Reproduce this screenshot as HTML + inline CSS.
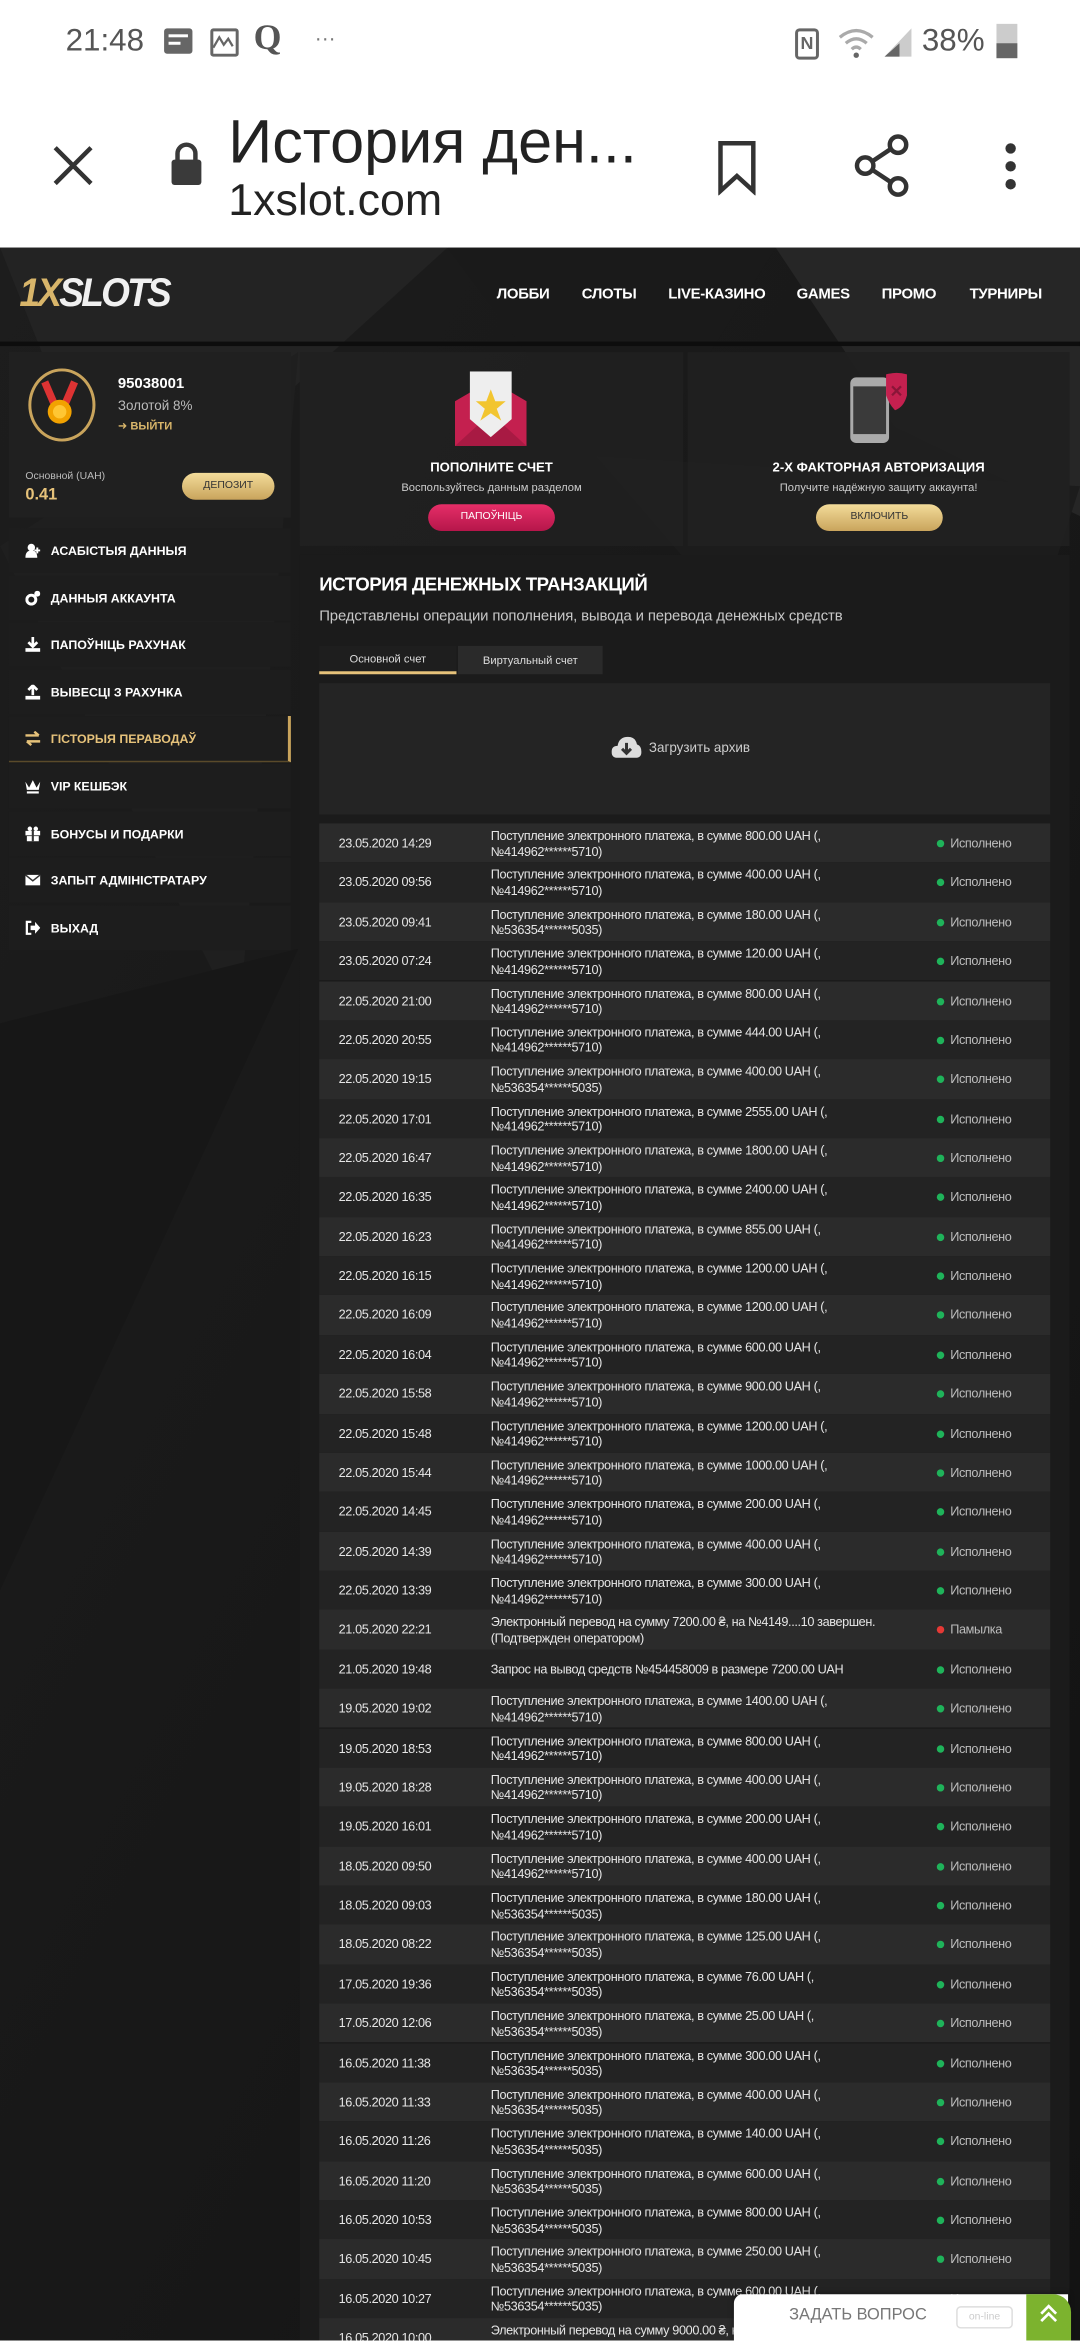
<!DOCTYPE html>
<html><head><meta charset="utf-8">
<style>
html,body{margin:0;padding:0;width:1080px;height:2340px;overflow:hidden;background:#fff;}
#w{position:absolute;left:0;top:0;width:724px;height:1569px;transform:scale(1.49171);transform-origin:0 0;font-family:"Liberation Sans","DejaVu Sans",sans-serif;overflow:hidden;}
.abs{position:absolute}
#status{left:0;top:0;width:724px;height:56px;background:#fff;color:#555;}
#bbar{left:0;top:56px;width:724px;height:110px;background:#fff;}
#page{left:0;top:166px;width:724px;height:1403px;background:#141414;overflow:hidden;}
.nav{position:absolute;top:26px;font-size:10px;font-weight:bold;color:#fff;letter-spacing:-0.2px}
.card{position:absolute;background:rgba(32,32,32,0.93)}
.mi{position:absolute;left:6px;width:189px;height:30px;background:rgba(30,30,30,0.95);color:#fff;font-size:8.3px;font-weight:bold;line-height:30px;}
.mi span.t{position:absolute;left:28px}
.mi svg{position:absolute;left:11px;top:10px}
.row{position:absolute;left:214px;width:490px;height:26.37px;font-size:8.5px;color:#e6e6e6;letter-spacing:-0.25px}
.row .d{position:absolute;left:13px;top:0;line-height:26.37px}
.row .x{position:absolute;left:115px;top:3px;line-height:10.5px;width:300px;white-space:nowrap}
.row .x1{top:0;line-height:26.37px}
.row .s{position:absolute;left:423px;top:0;line-height:26.37px;color:#bdbdbd}
.row .s:before{content:"";position:absolute;left:-9px;top:11px;width:5px;height:5px;border-radius:50%;background:#1fb35a}
.row .s.e:before{background:#e53935}
.r0{background:#2b2b2b}.r1{background:#232323}
</style></head><body>
<div id="w">
<div id="status" class="abs">
 <div class="abs" style="left:44px;top:16px;font-size:21px;color:#555">21:48</div>
 <div class="abs" style="left:110px;top:19px;width:19px;height:17px;background:#666;border-radius:2px"></div>
 <div class="abs" style="left:113px;top:23px;width:13px;height:2px;background:#fff"></div>
 <div class="abs" style="left:113px;top:28px;width:8px;height:2px;background:#fff"></div>
 <div class="abs" style="left:141px;top:19px;width:15px;height:15px;border:2px solid #666;border-radius:2px"></div>
 <svg class="abs" style="left:142px;top:22px" width="15" height="12"><path d="M1 10 L5 3 L8 8 L11 4 L14 9" stroke="#666" stroke-width="1.5" fill="none"/></svg>
 <div class="abs" style="left:170px;top:13px;font-size:24px;font-weight:bold;font-family:'Liberation Serif',serif;color:#555">Q</div>
 <div class="abs" style="left:211px;top:17px;font-size:14px;color:#777">···</div>
 <div class="abs" style="left:533px;top:19px;width:12px;height:17px;border:2px solid #666;border-radius:3px;font-size:12px;font-weight:bold;color:#666;line-height:17px;text-align:center">N</div>
 <svg class="abs" style="left:561px;top:17px" width="26" height="22"><path d="M2 8 Q13 -1 24 8 M6 12 Q13 6 20 12 M10 16 Q13 13 16 16" stroke="#aaa" stroke-width="2.2" fill="none"/><circle cx="13" cy="20" r="1.8" fill="#666"/></svg>
 <svg class="abs" style="left:591px;top:17px" width="22" height="22"><path d="M2 21 L20 21 L20 2 Z" fill="#ccc"/><path d="M2 21 L12 21 L12 12 Z" fill="#666"/></svg>
 <div class="abs" style="left:618px;top:16px;font-size:21px;color:#555">38%</div>
 <div class="abs" style="left:668px;top:16px;width:14px;height:23px;background:#ccc"></div>
 <div class="abs" style="left:668px;top:29px;width:14px;height:10px;background:#666"></div>
</div>
<div id="bbar" class="abs">
 <svg class="abs" style="left:34px;top:40px" width="30" height="30"><path d="M3 3 L27 27 M27 3 L3 27" stroke="#333" stroke-width="3"/></svg>
 <svg class="abs" style="left:113px;top:38px" width="24" height="32"><path d="M6 14 V9 A6 6 0 0 1 18 9 V14" stroke="#3a3a3a" stroke-width="3" fill="none"/><rect x="2" y="13" width="20" height="17" rx="2" fill="#3a3a3a"/></svg>
 <div class="abs" style="left:153px;top:16px;font-size:41px;color:#222;white-space:nowrap">История ден...</div>
 <div class="abs" style="left:153px;top:62px;font-size:30px;color:#222">1xslot.com</div>
 <svg class="abs" style="left:478px;top:37px" width="32" height="38"><path d="M5 3 H27 V35 L16 25 L5 35 Z" stroke="#333" stroke-width="3" fill="none"/></svg>
 <svg class="abs" style="left:570px;top:32px" width="42" height="46"><circle cx="32" cy="9" r="5.5" stroke="#333" stroke-width="3" fill="none"/><circle cx="10" cy="23" r="5.5" stroke="#333" stroke-width="3" fill="none"/><circle cx="32" cy="37" r="5.5" stroke="#333" stroke-width="3" fill="none"/><path d="M15 20 L27 12 M15 26 L27 34" stroke="#333" stroke-width="3"/></svg>
 <div class="abs" style="left:674px;top:40px;width:7px;height:7px;border-radius:50%;background:#333"></div>
 <div class="abs" style="left:674px;top:52px;width:7px;height:7px;border-radius:50%;background:#333"></div>
 <div class="abs" style="left:674px;top:64px;width:7px;height:7px;border-radius:50%;background:#333"></div>
</div>
<div id="page" class="abs">
 <svg class="abs" style="left:0;top:0" width="724" height="1403">
  <defs><linearGradient id="bg" x1="0" y1="0" x2="1" y2="1"><stop offset="0" stop-color="#1d1d1d"/><stop offset="1" stop-color="#131313"/></linearGradient></defs>
  <rect width="724" height="1403" fill="url(#bg)"/>
  <polygon points="0,0 300,0 80,200" fill="#232323"/>
  <polygon points="300,0 520,0 420,160" fill="#1a1a1a"/>
  <polygon points="520,0 724,0 724,180 600,120" fill="#262626"/>
  <polygon points="0,200 200,70 160,520" fill="#1f1f1f"/>
  <polygon points="0,520 200,470 0,900" fill="#171717"/>
  <polygon points="400,140 724,160 640,420" fill="#1c1c1c"/>
 </svg>
 <div class="abs" style="left:0;top:63px;width:724px;height:3px;background:#0d0d0d"></div>
 <div class="abs" style="left:13px;top:15px;font-size:27px;font-weight:900;font-style:italic;letter-spacing:-2px;transform:scaleX(0.92);transform-origin:0 0"><span style="color:#d8b56a">1X</span><span style="color:#f0f0f0">SLOTS</span></div>
 <div class="nav" style="left:333px">ЛОББИ</div>
 <div class="nav" style="left:390px">СЛОТЫ</div>
 <div class="nav" style="left:448px">LIVE-КАЗИНО</div>
 <div class="nav" style="left:534px">GAMES</div>
 <div class="nav" style="left:591px">ПРОМО</div>
 <div class="nav" style="left:650px">ТУРНИРЫ</div>

 <div class="card" style="left:6px;top:70px;width:189px;height:111px"></div>
 <div class="abs" style="left:19px;top:81px;width:41px;height:45px;border:2px solid #c9a45c;border-radius:50%"></div>
 <svg class="abs" style="left:26px;top:88px" width="28" height="34"><path d="M4 2 L10 16 M24 2 L18 16" stroke="#d33" stroke-width="5"/><circle cx="14" cy="22" r="8" fill="#f2a200"/><circle cx="14" cy="22" r="4.5" fill="#ffc633"/></svg>
 <div class="abs" style="left:79px;top:86px;font-size:10px;font-weight:bold;color:#fff">95038001</div>
 <div class="abs" style="left:79px;top:101px;font-size:9px;color:#bbb">Золотой 8%</div>
 <div class="abs" style="left:79px;top:115px;font-size:7.5px;font-weight:bold;color:#d8b56a">➜ ВЫЙТИ</div>
 <div class="abs" style="left:17px;top:150px;font-size:7px;color:#bbb">Основной (UAH)</div>
 <div class="abs" style="left:17px;top:160px;font-size:11px;font-weight:bold;color:#e6c27a">0.41</div>
 <div class="abs" style="left:122px;top:151px;width:62px;height:18px;border-radius:9px;background:linear-gradient(#f3dc9a,#c9a45c);font-size:7px;color:#333;text-align:center;line-height:18px">ДЕПОЗИТ</div>

 <div class="mi" style="top:188px"><svg width="10" height="10"><circle cx="4" cy="3" r="2.5" fill="#fff"/><path d="M0 10 Q0 5 4 5 Q8 5 8 10Z" fill="#fff"/><path d="M8 3 V7 M6 5 H10" stroke="#fff" stroke-width="1.3"/></svg><span class="t">АСАБІСТЫЯ ДАННЫЯ</span></div>
 <div class="mi" style="top:219.6px"><svg width="10" height="10"><circle cx="4" cy="6" r="3" stroke="#fff" stroke-width="2" fill="none"/><circle cx="8" cy="2" r="2" fill="#fff"/></svg><span class="t">ДАННЫЯ АККАУНТА</span></div>
 <div class="mi" style="top:251.2px"><svg width="10" height="10"><path d="M5 0 V6 M2 3.5 L5 6.5 L8 3.5" stroke="#fff" stroke-width="1.8" fill="none"/><rect x="0" y="7.5" width="10" height="2.5" fill="#fff"/></svg><span class="t">ПАПОЎНІЦЬ РАХУНАК</span></div>
 <div class="mi" style="top:282.8px"><svg width="10" height="10"><path d="M5 7 V1 M2 3.5 L5 0.5 L8 3.5" stroke="#fff" stroke-width="1.8" fill="none"/><rect x="0" y="7.5" width="10" height="2.5" fill="#fff"/></svg><span class="t">ВЫВЕСЦІ З РАХУНКА</span></div>
 <div class="mi" style="top:314.4px;color:#e6c27a;border-right:2px solid #c9a45c;border-bottom:1px solid #5a4a2a;width:187px"><svg width="10" height="10"><path d="M0 3 H9 M6 0.5 L9 3 M10 7 H1 M4 9.5 L1 7" stroke="#e6c27a" stroke-width="1.6" fill="none"/></svg><span class="t">ГІСТОРЫЯ ПЕРАВОДАЎ</span></div>
 <div class="mi" style="top:346px"><svg width="10" height="10"><path d="M0 2 L2.5 6 L5 1 L7.5 6 L10 2 L9 7.5 H1Z" fill="#fff"/><rect x="1" y="8.5" width="8" height="1.5" fill="#fff"/></svg><span class="t">VIP КЕШБЭК</span></div>
 <div class="mi" style="top:377.6px"><svg width="10" height="10"><rect x="0" y="3" width="10" height="3" fill="#fff"/><rect x="1" y="6.5" width="8" height="3.5" fill="#fff"/><rect x="4.3" y="3" width="1.4" height="7" fill="#333"/><circle cx="3" cy="1.6" r="1.5" fill="#fff"/><circle cx="7" cy="1.6" r="1.5" fill="#fff"/></svg><span class="t">БОНУСЫ И ПОДАРКИ</span></div>
 <div class="mi" style="top:409.2px"><svg width="10" height="10"><rect x="0" y="1.5" width="10" height="7" fill="#fff"/><path d="M0 1.5 L5 5.5 L10 1.5" stroke="#333" stroke-width="1" fill="none"/></svg><span class="t">ЗАПЫТ АДМІНІСТРАТАРУ</span></div>
 <div class="mi" style="top:440.8px"><svg width="10" height="10"><path d="M4 1 H1 V9 H4" stroke="#fff" stroke-width="1.5" fill="none"/><path d="M3.5 3.5 H6.5 V1 L10 5 L6.5 9 V6.5 H3.5Z" fill="#fff"/></svg><span class="t">ВЫХАД</span></div>

 <div class="card" style="left:201px;top:70px;width:257px;height:130px"></div>
 <div class="card" style="left:461px;top:70px;width:256px;height:130px"></div>
 <svg class="abs" style="left:305px;top:83px" width="48" height="50"><path d="M0 20 L24 6 L48 20 V50 H0Z" fill="#c4204f"/><path d="M0 50 L24 28 L48 50Z" fill="#a81a43"/><path d="M10 0 H38 V32 L24 44 L10 32Z" fill="#eee"/><path d="M24 12 L27 20 L34 20 L28 25 L31 33 L24 28 L17 33 L20 25 L14 20 L21 20Z" fill="#f2c530"/></svg>
 <div class="abs" style="left:201px;top:142px;width:257px;text-align:center;font-size:8.8px;font-weight:bold;color:#fff">ПОПОЛНИТЕ СЧЕТ</div>
 <div class="abs" style="left:201px;top:156px;width:257px;text-align:center;font-size:7.5px;color:#ccc">Воспользуйтесь данным разделом</div>
 <div class="abs" style="left:287px;top:172px;width:85px;height:18px;border-radius:9px;background:linear-gradient(#e62e68,#b5164a);font-size:7px;color:#fff;text-align:center;line-height:18px">ПАПОЎНІЦЬ</div>
 <svg class="abs" style="left:568px;top:83px" width="44" height="50"><rect x="2" y="4" width="26" height="44" rx="4" fill="#aaa"/><rect x="4" y="10" width="22" height="32" fill="#3a3a3a"/><path d="M26 2 Q33 0 40 2 V16 Q38 24 32 26 Q28 22 26 16Z" fill="#c4204f"/><path d="M30 10 L36 16 M36 10 L30 16" stroke="#8a1538" stroke-width="1.5"/></svg>
 <div class="abs" style="left:461px;top:142px;width:256px;text-align:center;font-size:8.8px;font-weight:bold;color:#fff">2-Х ФАКТОРНАЯ АВТОРИЗАЦИЯ</div>
 <div class="abs" style="left:461px;top:156px;width:256px;text-align:center;font-size:7.5px;color:#ccc">Получите надёжную защиту аккаунта!</div>
 <div class="abs" style="left:547px;top:172px;width:85px;height:18px;border-radius:9px;background:linear-gradient(#f3dc9a,#c9a45c);font-size:7px;color:#333;text-align:center;line-height:18px">ВКЛЮЧИТЬ</div>

 <div class="card" style="left:201px;top:206px;width:516px;height:1200px;background:rgba(28,28,28,0.94)"></div>
 <div class="abs" style="left:214px;top:219px;font-size:12.5px;font-weight:bold;color:#fff;letter-spacing:-0.3px">ИСТОРИЯ ДЕНЕЖНЫХ ТРАНЗАКЦИЙ</div>
 <div class="abs" style="left:214px;top:242px;font-size:10px;color:#c8c8c8;letter-spacing:-0.1px">Представлены операции пополнения, вывода и перевода денежных средств</div>
 <div class="abs" style="left:214px;top:267px;width:92px;height:17px;border-bottom:2px solid #e6c27a;font-size:7.5px;color:#ddd;text-align:center;line-height:17px;background:#1e1e1e">Основной счет</div>
 <div class="abs" style="left:307px;top:267px;width:97px;height:19px;background:#2a2a2a;font-size:7.5px;color:#ddd;text-align:center;line-height:19px">Виртуальный счет</div>
 <div class="abs" style="left:214px;top:292px;width:490px;height:88px;background:#242424"></div>
 <svg class="abs" style="left:410px;top:327px" width="20" height="16"><path d="M4 15 Q0 15 0 11 Q0 7 4 7 Q5 1 11 1 Q16 1 17 6 Q20 7 20 11 Q20 15 16 15Z" fill="#ddd"/><path d="M10 5 V11 M7 9 L10 12 L13 9" stroke="#333" stroke-width="2" fill="none"/></svg>
 <div class="abs" style="left:435px;top:330px;font-size:9px;color:#ccc">Загрузить архив</div>
</div>

<div id="rows" class="abs" style="left:0;top:0">
<div class="row r0" style="top:552.0px"><span class="d">23.05.2020 14:29</span><span class="x">Поступление электронного платежа, в сумме 800.00 UAH (,<br>№414962******5710)</span><span class="s">Исполнено</span></div>
<div class="row r1" style="top:578.4px"><span class="d">23.05.2020 09:56</span><span class="x">Поступление электронного платежа, в сумме 400.00 UAH (,<br>№414962******5710)</span><span class="s">Исполнено</span></div>
<div class="row r0" style="top:604.7px"><span class="d">23.05.2020 09:41</span><span class="x">Поступление электронного платежа, в сумме 180.00 UAH (,<br>№536354******5035)</span><span class="s">Исполнено</span></div>
<div class="row r1" style="top:631.1px"><span class="d">23.05.2020 07:24</span><span class="x">Поступление электронного платежа, в сумме 120.00 UAH (,<br>№414962******5710)</span><span class="s">Исполнено</span></div>
<div class="row r0" style="top:657.5px"><span class="d">22.05.2020 21:00</span><span class="x">Поступление электронного платежа, в сумме 800.00 UAH (,<br>№414962******5710)</span><span class="s">Исполнено</span></div>
<div class="row r1" style="top:683.9px"><span class="d">22.05.2020 20:55</span><span class="x">Поступление электронного платежа, в сумме 444.00 UAH (,<br>№414962******5710)</span><span class="s">Исполнено</span></div>
<div class="row r0" style="top:710.2px"><span class="d">22.05.2020 19:15</span><span class="x">Поступление электронного платежа, в сумме 400.00 UAH (,<br>№536354******5035)</span><span class="s">Исполнено</span></div>
<div class="row r1" style="top:736.6px"><span class="d">22.05.2020 17:01</span><span class="x">Поступление электронного платежа, в сумме 2555.00 UAH (,<br>№414962******5710)</span><span class="s">Исполнено</span></div>
<div class="row r0" style="top:763.0px"><span class="d">22.05.2020 16:47</span><span class="x">Поступление электронного платежа, в сумме 1800.00 UAH (,<br>№414962******5710)</span><span class="s">Исполнено</span></div>
<div class="row r1" style="top:789.3px"><span class="d">22.05.2020 16:35</span><span class="x">Поступление электронного платежа, в сумме 2400.00 UAH (,<br>№414962******5710)</span><span class="s">Исполнено</span></div>
<div class="row r0" style="top:815.7px"><span class="d">22.05.2020 16:23</span><span class="x">Поступление электронного платежа, в сумме 855.00 UAH (,<br>№414962******5710)</span><span class="s">Исполнено</span></div>
<div class="row r1" style="top:842.1px"><span class="d">22.05.2020 16:15</span><span class="x">Поступление электронного платежа, в сумме 1200.00 UAH (,<br>№414962******5710)</span><span class="s">Исполнено</span></div>
<div class="row r0" style="top:868.4px"><span class="d">22.05.2020 16:09</span><span class="x">Поступление электронного платежа, в сумме 1200.00 UAH (,<br>№414962******5710)</span><span class="s">Исполнено</span></div>
<div class="row r1" style="top:894.8px"><span class="d">22.05.2020 16:04</span><span class="x">Поступление электронного платежа, в сумме 600.00 UAH (,<br>№414962******5710)</span><span class="s">Исполнено</span></div>
<div class="row r0" style="top:921.2px"><span class="d">22.05.2020 15:58</span><span class="x">Поступление электронного платежа, в сумме 900.00 UAH (,<br>№414962******5710)</span><span class="s">Исполнено</span></div>
<div class="row r1" style="top:947.6px"><span class="d">22.05.2020 15:48</span><span class="x">Поступление электронного платежа, в сумме 1200.00 UAH (,<br>№414962******5710)</span><span class="s">Исполнено</span></div>
<div class="row r0" style="top:973.9px"><span class="d">22.05.2020 15:44</span><span class="x">Поступление электронного платежа, в сумме 1000.00 UAH (,<br>№414962******5710)</span><span class="s">Исполнено</span></div>
<div class="row r1" style="top:1000.3px"><span class="d">22.05.2020 14:45</span><span class="x">Поступление электронного платежа, в сумме 200.00 UAH (,<br>№414962******5710)</span><span class="s">Исполнено</span></div>
<div class="row r0" style="top:1026.7px"><span class="d">22.05.2020 14:39</span><span class="x">Поступление электронного платежа, в сумме 400.00 UAH (,<br>№414962******5710)</span><span class="s">Исполнено</span></div>
<div class="row r1" style="top:1053.0px"><span class="d">22.05.2020 13:39</span><span class="x">Поступление электронного платежа, в сумме 300.00 UAH (,<br>№414962******5710)</span><span class="s">Исполнено</span></div>
<div class="row r0" style="top:1079.4px"><span class="d">21.05.2020 22:21</span><span class="x">Электронный перевод на сумму 7200.00 ₴, на №4149....10 завершен.<br>(Подтвержден оператором)</span><span class="s e">Памылка</span></div>
<div class="row r1" style="top:1105.8px"><span class="d">21.05.2020 19:48</span><span class="x x1">Запрос на вывод средств №454458009 в размере 7200.00 UAH</span><span class="s">Исполнено</span></div>
<div class="row r0" style="top:1132.1px"><span class="d">19.05.2020 19:02</span><span class="x">Поступление электронного платежа, в сумме 1400.00 UAH (,<br>№414962******5710)</span><span class="s">Исполнено</span></div>
<div class="row r1" style="top:1158.5px"><span class="d">19.05.2020 18:53</span><span class="x">Поступление электронного платежа, в сумме 800.00 UAH (,<br>№414962******5710)</span><span class="s">Исполнено</span></div>
<div class="row r0" style="top:1184.9px"><span class="d">19.05.2020 18:28</span><span class="x">Поступление электронного платежа, в сумме 400.00 UAH (,<br>№414962******5710)</span><span class="s">Исполнено</span></div>
<div class="row r1" style="top:1211.3px"><span class="d">19.05.2020 16:01</span><span class="x">Поступление электронного платежа, в сумме 200.00 UAH (,<br>№414962******5710)</span><span class="s">Исполнено</span></div>
<div class="row r0" style="top:1237.6px"><span class="d">18.05.2020 09:50</span><span class="x">Поступление электронного платежа, в сумме 400.00 UAH (,<br>№414962******5710)</span><span class="s">Исполнено</span></div>
<div class="row r1" style="top:1264.0px"><span class="d">18.05.2020 09:03</span><span class="x">Поступление электронного платежа, в сумме 180.00 UAH (,<br>№536354******5035)</span><span class="s">Исполнено</span></div>
<div class="row r0" style="top:1290.4px"><span class="d">18.05.2020 08:22</span><span class="x">Поступление электронного платежа, в сумме 125.00 UAH (,<br>№536354******5035)</span><span class="s">Исполнено</span></div>
<div class="row r1" style="top:1316.7px"><span class="d">17.05.2020 19:36</span><span class="x">Поступление электронного платежа, в сумме 76.00 UAH (,<br>№536354******5035)</span><span class="s">Исполнено</span></div>
<div class="row r0" style="top:1343.1px"><span class="d">17.05.2020 12:06</span><span class="x">Поступление электронного платежа, в сумме 25.00 UAH (,<br>№536354******5035)</span><span class="s">Исполнено</span></div>
<div class="row r1" style="top:1369.5px"><span class="d">16.05.2020 11:38</span><span class="x">Поступление электронного платежа, в сумме 300.00 UAH (,<br>№536354******5035)</span><span class="s">Исполнено</span></div>
<div class="row r0" style="top:1395.8px"><span class="d">16.05.2020 11:33</span><span class="x">Поступление электронного платежа, в сумме 400.00 UAH (,<br>№536354******5035)</span><span class="s">Исполнено</span></div>
<div class="row r1" style="top:1422.2px"><span class="d">16.05.2020 11:26</span><span class="x">Поступление электронного платежа, в сумме 140.00 UAH (,<br>№536354******5035)</span><span class="s">Исполнено</span></div>
<div class="row r0" style="top:1448.6px"><span class="d">16.05.2020 11:20</span><span class="x">Поступление электронного платежа, в сумме 600.00 UAH (,<br>№536354******5035)</span><span class="s">Исполнено</span></div>
<div class="row r1" style="top:1475.0px"><span class="d">16.05.2020 10:53</span><span class="x">Поступление электронного платежа, в сумме 800.00 UAH (,<br>№536354******5035)</span><span class="s">Исполнено</span></div>
<div class="row r0" style="top:1501.3px"><span class="d">16.05.2020 10:45</span><span class="x">Поступление электронного платежа, в сумме 250.00 UAH (,<br>№536354******5035)</span><span class="s">Исполнено</span></div>
<div class="row r1" style="top:1527.7px"><span class="d">16.05.2020 10:27</span><span class="x">Поступление электронного платежа, в сумме 600.00 UAH (,<br>№536354******5035)</span><span class="s">Исполнено</span></div>
<div class="row r0" style="top:1554.1px"><span class="d">16.05.2020 10:00</span><span class="x">Электронный перевод на сумму 9000.00 ₴, на №4149....10 завершен.<br>(Подтвержден оператором)</span><span class="s e">Памылка</span></div>
</div>

<div class="abs" style="left:492px;top:1538px;width:224px;height:32px;background:#fff;border-radius:6px 0 0 0;box-shadow:0 0 4px rgba(0,0,0,0.4)"></div>
<div class="abs" style="left:529px;top:1546px;font-size:11px;color:#777">ЗАДАТЬ ВОПРОС</div>
<div class="abs" style="left:641px;top:1546px;width:36px;height:13px;border:1px solid #ddd;border-radius:3px;font-size:7px;color:#ccc;text-align:center;line-height:13px">on-line</div>
<div class="abs" style="left:688px;top:1538px;width:30px;height:32px;background:#7cb32e;border-radius:0 12px 0 0"></div>
<svg class="abs" style="left:695px;top:1543px" width="16" height="16"><path d="M3 8 L8 3 L13 8 M3 13 L8 8 L13 13" stroke="#fff" stroke-width="1.8" fill="none"/></svg>
</div>
</body></html>
